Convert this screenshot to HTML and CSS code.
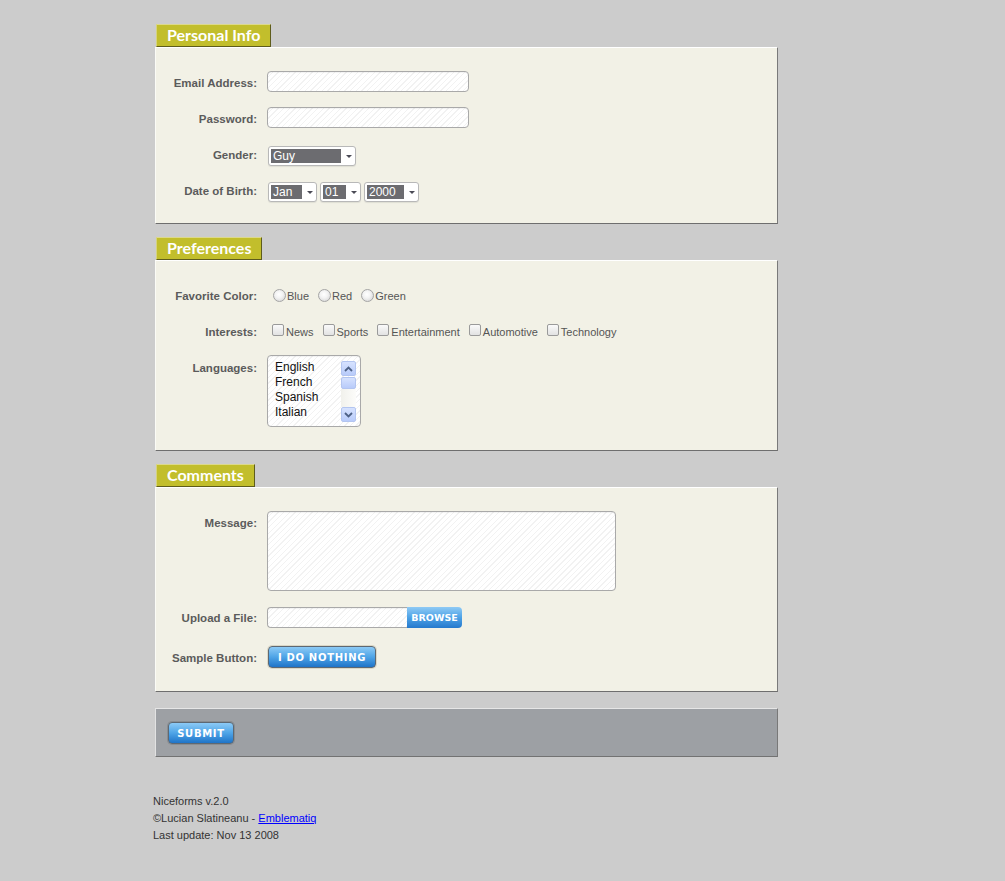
FILE: index.html
```html
<!DOCTYPE html>
<html lang="en">
  <head>
    <meta charset="UTF-8" />
    <title>Niceforms</title>
    <link rel="stylesheet" href="styles.css">
  </head>
  <body>
    <form class="niceform" action="#">
      <div class="section">
        <div class="legend">Personal Info</div>
        <div class="box">
          <div class="row">
            <label>Email Address:</label>
            <input class="text" type="text" />
          </div>
          <div class="row">
            <label>Password:</label>
            <input class="text" type="password" />
          </div>
          <div class="row">
            <label>Gender:</label>
            <div class="selects">
              <div class="select gender"><span class="value">Guy</span><span class="arrow"></span></div>
            </div>
          </div>
          <div class="row">
            <label>Date of Birth:</label>
            <div class="selects">
              <div class="select month"><span class="value">Jan</span><span class="arrow"></span></div>
              <div class="select day"><span class="value">01</span><span class="arrow"></span></div>
              <div class="select year"><span class="value">2000</span><span class="arrow"></span></div>
            </div>
          </div>
        </div>
      </div>

      <div class="section">
        <div class="legend">Preferences</div>
        <div class="box">
          <div class="row">
            <label>Favorite Color:</label>
            <div class="options">
              <span class="opt"><span class="radio"></span>Blue</span>
              <span class="opt"><span class="radio"></span>Red</span>
              <span class="opt"><span class="radio"></span>Green</span>
            </div>
          </div>
          <div class="row">
            <label>Interests:</label>
            <div class="options">
              <span class="opt"><span class="check"></span>News</span>
              <span class="opt"><span class="check"></span>Sports</span>
              <span class="opt"><span class="check"></span>Entertainment</span>
              <span class="opt"><span class="check"></span>Automotive</span>
              <span class="opt"><span class="check"></span>Technology</span>
            </div>
          </div>
          <div class="row">
            <label>Languages:</label>
            <div class="listbox">
              <ul>
                <li>English</li>
                <li>French</li>
                <li>Spanish</li>
                <li>Italian</li>
              </ul>
              <div class="scrollbar">
                <span class="sb-btn">
                  <svg width="9" height="6" viewBox="0 0 9 6"><path d="M1 5 L4.5 1.5 L8 5" fill="none" stroke="#4d6185" stroke-width="1.8"/></svg>
                </span>
                <span class="sb-thumb"></span>
                <span class="sb-track"></span>
                <span class="sb-btn">
                  <svg width="9" height="6" viewBox="0 0 9 6"><path d="M1 1 L4.5 4.5 L8 1" fill="none" stroke="#4d6185" stroke-width="1.8"/></svg>
                </span>
              </div>
            </div>
          </div>
        </div>
      </div>

      <div class="section">
        <div class="legend">Comments</div>
        <div class="box">
          <div class="row">
            <label>Message:</label>
            <textarea class="textarea"></textarea>
          </div>
          <div class="row">
            <label>Upload a File:</label>
            <div class="file">
              <span class="file-path"></span>
              <span class="file-btn">BROWSE</span>
            </div>
          </div>
          <div class="row row-button">
            <label>Sample Button:</label>
            <button type="button" class="btn sample">I DO NOTHING</button>
          </div>
        </div>
      </div>

      <div class="submit-bar">
        <button type="submit" class="btn submit">SUBMIT</button>
      </div>
    </form>

    <div class="footer">
      Niceforms v.2.0<br />
      &copy;Lucian Slatineanu - <a href="#">Emblematiq</a><br />
      Last update: Nov 13 2008
    </div>
  </body>
</html>
```

FILE: styles.css
```css
* {
  box-sizing: border-box;
}
body {
  margin: 0;
  padding: 24px 0 0 153px;
  background: #cccccc;
  font-family: "Liberation Sans", Arial, sans-serif;
  font-size: 11px;
  color: #555;
}
.niceform {
  margin-left: 2px;
  width: 623px;
}
.section {
  margin-bottom: 13px;
}
.legend {
  display: inline-block;
  margin-left: 1px;
  height: 23px;
  padding: 0 10px 0 10px;
  background: #c2be2c;
  border: 1px solid;
  border-color: #dcd98c #5e5c1c #5e5c1c #d6d37e;
  color: #fff;
  font-family: Lato, "Open Sans", sans-serif;
  font-weight: 700;
  font-size: 16px;
  line-height: 20px;
  vertical-align: bottom;
}
.box {
  background: #f2f1e6;
  border: 1px solid;
  border-color: #fff #7a7a7a #6e6e6e #fbfbf6;
  padding: 18px 0 13px 0;
}
.row {
  display: flex;
  align-items: flex-start;
  padding: 5px 0 10px;
}
.row label {
  width: 101px;
  height: 21px;
  margin-right: 10px;
  flex-shrink: 0;
  text-align: right;
  font-weight: bold;
  font-size: 11.5px;
  color: #5b5b5b;
  line-height: 21px;
  padding-top: 2px;
}
.text,
.textarea,
.file-path,
.listbox {
  border: 1px solid #a9a9a9;
  border-radius: 4px;
  background: repeating-linear-gradient(135deg, #fff 0 3px, #f2f2f2 3px 4px);
  box-shadow: inset 0 1px 1px rgba(0, 0, 0, 0.05);
}
.text {
  display: block;
  width: 202px;
  height: 21px;
  margin: 0;
  padding: 2px 4px;
  font: 12px "Liberation Sans", Arial, sans-serif;
}
.textarea {
  display: block;
  width: 349px;
  height: 80px;
  margin: 0;
  resize: none;
  padding: 4px;
  font: 12px "Liberation Sans", Arial, sans-serif;
}

/* replaced selects */
.selects {
  display: flex;
  gap: 3px;
  margin-top: 3px;
  margin-bottom: -3px;
}
.select {
  display: flex;
  height: 20px;
  padding: 2px 0 2px 2px;
  background: #fff;
  border: 1px solid #b8b8b8;
  border-radius: 3px;
  box-shadow: 0 1px 1px rgba(0, 0, 0, 0.08);
}
.selects .select:first-child {
  margin-left: 1px;
}
.select .value {
  flex: 1;
  background: #6c6c70;
  color: #fff;
  font-size: 12px;
  line-height: 14px;
  padding-left: 2px;
}
.select .arrow {
  width: 14px;
  position: relative;
}
.select .arrow::after {
  content: "";
  position: absolute;
  left: 5px;
  top: 6px;
  border-left: 3px solid transparent;
  border-right: 3px solid transparent;
  border-top: 3px solid #4a4a55;
}
.gender {
  width: 88px;
}
.month {
  width: 49px;
}
.day {
  width: 41px;
}
.year {
  width: 55px;
}

/* radios and checkboxes */
.options {
  display: flex;
  padding-left: 6px;
  height: 21px;
  align-items: center;
}
.opt {
  display: flex;
  align-items: center;
  margin-right: 9px;
  color: #555;
  font-size: 11px;
  padding-top: 2px;
}
.radio {
  width: 13px;
  height: 13px;
  margin-right: 1px;
  border: 1px solid #a5a5a5;
  border-radius: 50%;
  background: radial-gradient(circle at 45% 40%, #fff 0, #f3f3f3 40%, #cfcfcf 100%);
}
.check {
  width: 12px;
  height: 12px;
  margin-right: 2px;
  margin-top: -3px;
  border: 1px solid #9a9a9a;
  border-radius: 2px;
  background: linear-gradient(#fafafa, #e2e2e2);
}
.options .opt:first-child .check {
  margin-left: -1px;
}

/* listbox */
.listbox {
  display: flex;
  width: 94px;
  height: 72px;
  margin-top: -1px;
  padding: 4px 4px 4px 7px;
}
.listbox ul {
  list-style: none;
  margin: 0;
  padding: 0;
  flex: 1;
  font-size: 12px;
  line-height: 15px;
  color: #111;
}
.scrollbar {
  width: 15px;
  display: flex;
  flex-direction: column;
  margin-top: 1px;
}
.sb-btn,
.sb-thumb {
  display: flex;
  align-items: center;
  justify-content: center;
  border: 1px solid #b3c5f0;
  border-radius: 2px;
  background: linear-gradient(#d6e2fe, #b8cbfa);
}
.sb-btn {
  height: 15px;
}
.sb-thumb {
  height: 12px;
  margin-top: 1px;
}
.sb-track {
  flex: 1;
  background: linear-gradient(to right, #f1f1ec, #fcfcfa);
}

/* file */
.file {
  display: flex;
  height: 21px;
  margin-top: 1px;
  margin-bottom: -1px;
}
.file-path {
  width: 140px;
  border-radius: 4px 0 0 4px;
  border-right: 0;
}
.file-btn {
  width: 55px;
  border-radius: 0 4px 4px 0;
  background: linear-gradient(#8fcaf5, #4da2e6 50%, #2579cd);
  color: #fff;
  font-family: "DejaVu Sans", Verdana, sans-serif;
  font-weight: bold;
  font-size: 9.5px;
  line-height: 21px;
  text-align: center;
}

/* buttons */
.btn {
  display: block;
  margin: 0;
  padding: 0;
  border: 1px solid #5d6873;
  border-radius: 4px;
  background: linear-gradient(#8ccaf6, #4ea4e7 50%, #1f74c8);
  color: #fff;
  font-family: "DejaVu Sans", Verdana, sans-serif;
  font-weight: bold;
  font-size: 10px;
  letter-spacing: 0.7px;
  cursor: pointer;
}
.row-button {
  padding-top: 9px;
}
.sample {
  width: 108px;
  height: 22px;
  margin-left: 1px;
  box-shadow: 0 0 0 1px #dcd8c6;
}
.submit-bar {
  margin-top: 16px;
  height: 49px;
  padding: 13px 0 0 12px;
  background: #9da0a4;
  border: 1px solid;
  border-color: #e6e6e6 #787878 #727272 #e2e2e2;
}
.submit {
  width: 66px;
  height: 22px;
  box-shadow: 0 0 0 1px #8a8d90;
}

.footer {
  margin-top: 36px;
  color: #333;
  font-size: 11px;
  line-height: 17px;
}
.footer a {
  color: #0000ff;
}
```
